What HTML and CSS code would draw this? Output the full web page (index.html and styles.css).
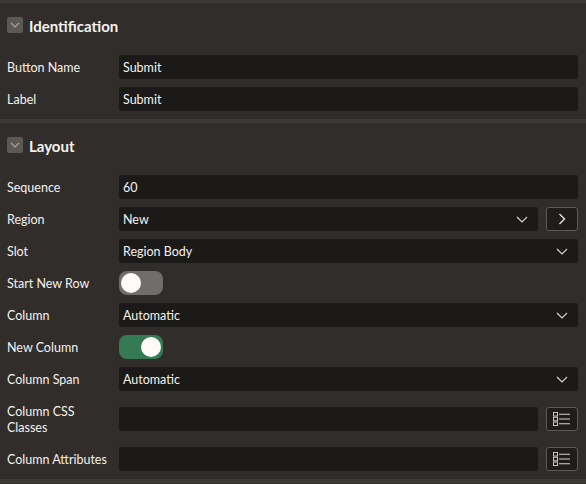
FILE: index.html
```html
<!DOCTYPE html>
<html lang="en">
<head>
    <meta charset="UTF-8">
    <meta name="viewport" content="width=device-width, initial-scale=1.0">
    <title>Button Properties</title>
    <link rel="stylesheet" href="styles.css">
</head>
<body>
    <div class="property-group">
        <div class="group-header">
            <span class="collapse-toggle">
                <svg width="10" height="6" viewBox="0 0 10 6"><path d="M1 1l4 4 4-4" fill="none" stroke="#a8a4a0" stroke-width="1.2"/></svg>
            </span>
            <h2>Identification</h2>
        </div>

        <div class="prop-row">
            <label>Button Name</label>
            <div class="field"><input type="text" value="Submit"></div>
        </div>
        <div class="prop-row">
            <label>Label</label>
            <div class="field"><input type="text" value="Submit"></div>
        </div>
    </div>

    <div class="property-group">
        <div class="group-header">
            <span class="collapse-toggle">
                <svg width="10" height="6" viewBox="0 0 10 6"><path d="M1 1l4 4 4-4" fill="none" stroke="#a8a4a0" stroke-width="1.2"/></svg>
            </span>
            <h2>Layout</h2>
        </div>

        <div class="prop-row">
            <label>Sequence</label>
            <div class="field"><input type="text" value="60"></div>
        </div>
        <div class="prop-row">
            <label>Region</label>
            <div class="field">
                <div class="select">New<svg class="caret" width="12" height="7" viewBox="0 0 12 7"><path d="M1 1l5 5 5-5" fill="none" stroke="#d6d3d0" stroke-width="1.2"/></svg></div>
                <button class="icon-btn" title="Go to Region">
                    <svg width="8" height="12" viewBox="0 0 8 12"><path d="M1.5 1l5 5-5 5" fill="none" stroke="#e6e3e0" stroke-width="1.4"/></svg>
                </button>
            </div>
        </div>
        <div class="prop-row">
            <label>Slot</label>
            <div class="field">
                <div class="select">Region Body<svg class="caret" width="12" height="7" viewBox="0 0 12 7"><path d="M1 1l5 5 5-5" fill="none" stroke="#d6d3d0" stroke-width="1.2"/></svg></div>
            </div>
        </div>
        <div class="prop-row">
            <label>Start New Row</label>
            <div class="field">
                <label class="switch">
                    <input type="checkbox">
                    <span class="slider"></span>
                </label>
            </div>
        </div>
        <div class="prop-row">
            <label>Column</label>
            <div class="field">
                <div class="select">Automatic<svg class="caret" width="12" height="7" viewBox="0 0 12 7"><path d="M1 1l5 5 5-5" fill="none" stroke="#d6d3d0" stroke-width="1.2"/></svg></div>
            </div>
        </div>
        <div class="prop-row">
            <label>New Column</label>
            <div class="field">
                <label class="switch">
                    <input type="checkbox" checked>
                    <span class="slider"></span>
                </label>
            </div>
        </div>
        <div class="prop-row">
            <label>Column Span</label>
            <div class="field">
                <div class="select">Automatic<svg class="caret" width="12" height="7" viewBox="0 0 12 7"><path d="M1 1l5 5 5-5" fill="none" stroke="#d6d3d0" stroke-width="1.2"/></svg></div>
            </div>
        </div>
        <div class="prop-row tall">
            <label>Column CSS Classes</label>
            <div class="field">
                <input type="text" value="">
                <button class="icon-btn" title="Pick Classes">
                    <svg width="18" height="14" viewBox="0 0 18 14">
                        <rect x="0.5" y="0.5" width="4" height="3.5" fill="none" stroke="#c9c6c3"/>
                        <rect x="0.5" y="5.25" width="4" height="3.5" fill="none" stroke="#c9c6c3"/>
                        <rect x="0.5" y="10" width="4" height="3.5" fill="none" stroke="#c9c6c3"/>
                        <path d="M6 2.25h11M6 7h11M6 11.75h11" stroke="#d6d3d0" stroke-width="1"/>
                    </svg>
                </button>
            </div>
        </div>
        <div class="prop-row">
            <label>Column Attributes</label>
            <div class="field">
                <input type="text" value="">
                <button class="icon-btn" title="Pick Attributes">
                    <svg width="18" height="14" viewBox="0 0 18 14">
                        <rect x="0.5" y="0.5" width="4" height="3.5" fill="none" stroke="#c9c6c3"/>
                        <rect x="0.5" y="5.25" width="4" height="3.5" fill="none" stroke="#c9c6c3"/>
                        <rect x="0.5" y="10" width="4" height="3.5" fill="none" stroke="#c9c6c3"/>
                        <path d="M6 2.25h11M6 7h11M6 11.75h11" stroke="#d6d3d0" stroke-width="1"/>
                    </svg>
                </button>
            </div>
        </div>
    </div>
</body>
</html>
```

FILE: styles.css
```css
* {
    margin: 0;
    padding: 0;
    box-sizing: border-box;
}

body {
    background-color: #312d2a;
    color: #f4f2f0;
    font-family: Lato, "Noto Sans", sans-serif;
    font-size: 12.5px;
    border-top: 3px solid #3d3935;
}

/* Property groups */
.property-group {
    padding: 0 8px 4px 7px;
    border-bottom: 4px solid #3d3935;
}

.group-header {
    display: flex;
    align-items: center;
    height: 44px;
    margin-bottom: 4px;
}

.group-header h2 {
    font-size: 15px;
    font-weight: bold;
    margin-left: 6px;
    padding-top: 1px;
}

.collapse-toggle {
    width: 16px;
    height: 16px;
    border-radius: 2px;
    background-color: #5c5854;
    display: flex;
    align-items: center;
    justify-content: center;
}

/* Rows */
.prop-row {
    display: flex;
    align-items: center;
    min-height: 32px;
}

.prop-row.tall {
    padding: 7px 0;
}

.prop-row > label {
    width: 104px;
    margin-right: 8px;
    line-height: 16px;
    padding-top: 2px;
}

.field {
    flex: 1;
    display: flex;
    align-items: center;
    gap: 8px;
}

.field input[type="text"],
.select {
    flex: 1;
    height: 24px;
    padding: 1px 4px 0;
    background-color: #1c1a18;
    color: #f4f2f0;
    border: none;
    border-radius: 2px;
    font-family: inherit;
    font-size: inherit;
}

.select {
    display: flex;
    align-items: center;
    justify-content: space-between;
    padding-right: 10px;
}

.icon-btn {
    width: 32px;
    height: 24px;
    background-color: #1f1c1a;
    border: 1px solid #5e5a56;
    border-radius: 3px;
    display: flex;
    align-items: center;
    justify-content: center;
}

/* Switch */
.switch {
    position: relative;
    display: inline-block;
    width: 44px;
    height: 24px;
}

.switch input {
    opacity: 0;
    width: 0;
    height: 0;
}

.slider {
    position: absolute;
    top: 0;
    left: 0;
    right: 0;
    bottom: 0;
    background-color: #716d6a;
    border-radius: 8px;
}

.slider:before {
    position: absolute;
    content: "";
    height: 20px;
    width: 20px;
    left: 2px;
    top: 2px;
    background-color: #fcfbfa;
    border-radius: 50%;
}

input:checked + .slider {
    background-color: #357a52;
}

input:checked + .slider:before {
    transform: translateX(20px);
}
```
